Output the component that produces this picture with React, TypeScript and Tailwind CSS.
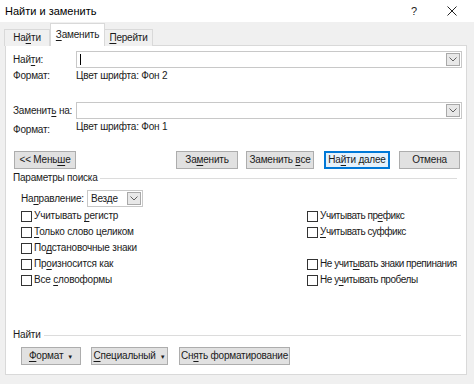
import React from 'react';

const U: React.FC<{ children: React.ReactNode }> = ({ children }) => <span className="underline underline-offset-2">{children}</span>;

const Btn: React.FC<{ className?: string; focused?: boolean; children: React.ReactNode }> = ({ className = '', focused, children }) => (
  <div
    className={
      'h-[18px] shrink-0 flex items-center justify-center ' +
      (focused ? 'bg-[#e5f1fb] border-2 border-[#0078d7] ' : 'bg-[#e1e1e1] border border-[#adadad] ') +
      className
    }
  >
    <span>{children}</span>
  </div>
);

const Chevron: React.FC = () => (
  <svg width="8" height="5" viewBox="0 0 8 5" fill="none">
    <path d="M0.5 0.5 L4 4 L7.5 0.5" stroke="#606060" strokeWidth="1" />
  </svg>
);

const Combo: React.FC<{ className?: string; value?: string; caret?: boolean }> = ({ className = '', value, caret }) => (
  <div className={'h-[17px] border border-[#c8c8c8] bg-white flex items-center ' + className}>
    <div className="flex-1 pl-[3px] flex items-center">
      {caret && <div className="w-px h-[11px] bg-black" />}
      {value}
    </div>
    <div className="w-[14px] h-[13px] mr-px border border-[#a9a9a9] bg-[#e8e8e8] flex items-center justify-center">
      <Chevron />
    </div>
  </div>
);

const Check: React.FC<{ children: React.ReactNode }> = ({ children }) => (
  <div className="h-[16px] flex items-center gap-[2px]">
    <div className="w-[11px] h-[11px] border border-[#333] bg-white shrink-0" />
    <span>{children}</span>
  </div>
);

const Caret: React.FC = () => <span className="ml-[4px] text-[6px]">▼</span>;

export default function App() {
  return (
    <div className="w-[474px] h-[384px] bg-[#f0f0f0] text-[#1a1a1a] text-[10px] tracking-[-0.2px] leading-none whitespace-nowrap overflow-hidden" style={{ fontFamily: '"Liberation Sans", Arial, sans-serif' }}>
      {/* Title */}
      <div className="h-[22px] bg-white flex items-center pl-[5px] pr-[17px] tracking-normal">
        <span className="text-[11px] text-black">Найти и заменить</span>
        <span className="ml-auto text-[11px]">?</span>
        <svg className="ml-[30px]" width="10" height="10" viewBox="0 0 10 10">
          <path d="M0.5 0.5 L9.5 9.5 M9.5 0.5 L0.5 9.5" stroke="#222" strokeWidth="1" />
        </svg>
      </div>

      {/* Tabs */}
      <div className="h-[23px] flex items-end pl-[4px] relative z-10">
        <div className="h-[17px] w-[46px] border border-b-0 border-[#d9d9d9] bg-[#f0f0f0] flex items-center justify-center -mb-px">
          <span>На<U>й</U>ти</span>
        </div>
        <div className="h-[23px] w-[55px] border border-b-0 border-[#d9d9d9] bg-white flex items-center justify-center -mb-px">
          <span><U>З</U>аменить</span>
        </div>
        <div className="h-[17px] w-[48px] border border-b-0 border-l-0 border-[#d9d9d9] bg-[#f0f0f0] flex items-center justify-center -mb-px">
          <span><U>П</U>ерейти</span>
        </div>
      </div>

      {/* Panel */}
      <div className="ml-[5px] w-[462px] h-[330px] border border-[#d9d9d9] bg-white pl-[7px] pr-[4px] pt-[5px]">
        <div className="flex items-center">
          <span className="w-[63px] shrink-0">Най<U>т</U>и:</span>
          <Combo className="flex-1" caret />
        </div>
        <div className="flex items-center h-[16px]">
          <span className="w-[63px] shrink-0">Формат:</span>
          <span>Цвет шрифта: Фон 2</span>
        </div>

        <div className="flex items-center mt-[18px]">
          <span className="w-[63px] shrink-0">Заменит<U>ь</U> на:</span>
          <Combo className="flex-1" />
        </div>
        <div className="flex h-[20px]">
          <span className="w-[63px] shrink-0 pt-[6px]">Формат:</span>
          <span className="pt-[3px]">Цвет шрифта: Фон 1</span>
        </div>

        <div className="flex items-center mt-[12px] pl-px">
          <Btn className="w-[62px]">{'<< Мень'}<U>ш</U>е</Btn>
          <Btn className="w-[62px] ml-auto">За<U>м</U>енить</Btn>
          <Btn className="w-[68px] ml-[8px]">Заменить <U>в</U>се</Btn>
          <Btn focused className="w-[66px] ml-[10px]">На<U>й</U>ти далее</Btn>
          <Btn className="w-[61px] ml-[9px] mr-[2px]">Отмена</Btn>
        </div>

        <div className="flex items-center mt-[2px] h-[14px] pr-[5px]">
          <span>Параметры поиска</span>
          <div className="flex-1 h-px bg-[#dcdcdc] ml-[2px]" />
        </div>

        <div className="pl-[8px]">
          <div className="flex items-center mt-[5px]">
            <span className="w-[66px] shrink-0">На<U>п</U>равление:</span>
            <Combo className="w-[56px]" value="Везде" />
          </div>
          <div className="flex mt-[1px]">
            <div className="w-[286px] shrink-0 flex flex-col">
              <Check>Учитывать <U>р</U>егистр</Check>
              <Check><U>Т</U>олько слово целиком</Check>
              <Check>По<U>д</U>становочные знаки</Check>
              <Check>Пр<U>о</U>износится как</Check>
              <Check>Все <U>с</U>ловоформы</Check>
            </div>
            <div className="flex flex-col tracking-[-0.45px]">
              <Check>Учитывать пр<U>е</U>фикс</Check>
              <Check><U>У</U>читывать суффикс</Check>
              <div className="h-[16px]" />
              <Check>Не учит<U>ы</U>вать знаки препинания</Check>
              <Check>Не у<U>ч</U>итывать пробелы</Check>
            </div>
          </div>
        </div>

        <div className="flex items-center mt-[40px] h-[14px] pr-[1px]">
          <span>Найти</span>
          <div className="flex-1 h-px bg-[#dcdcdc] ml-[3px]" />
        </div>

        <div className="flex items-center mt-[5px] pl-[8px]">
          <Btn className="w-[60px]"><U>Ф</U>ормат<Caret /></Btn>
          <Btn className="w-[77px] ml-[10px]"><U>С</U>пециальный<Caret /></Btn>
          <Btn className="w-[111px] ml-[11px]">Сн<U>я</U>ть форматирование</Btn>
        </div>
      </div>
    </div>
  );
}
